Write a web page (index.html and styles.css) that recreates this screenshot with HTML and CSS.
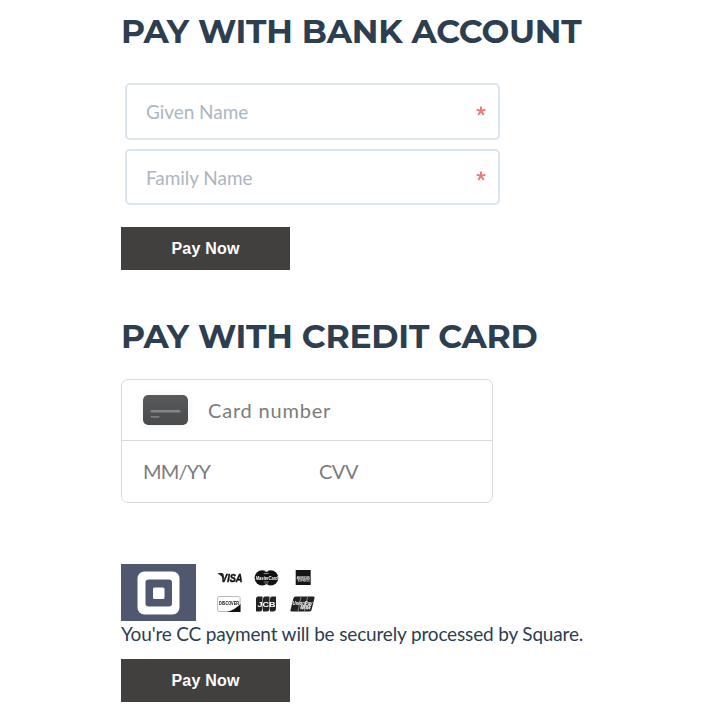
FILE: index.html
```html
<!DOCTYPE html>
<html lang="en">
<head>
<meta charset="utf-8">
<title>Payment</title>
<link rel="stylesheet" href="styles.css">
</head>
<body>
<main class="page">
  <section class="bank">
    <h2 class="title">PAY WITH BANK ACCOUNT</h2>
    <div class="fields">
      <div class="field"><span>Given Name</span><svg class="req" viewBox="0 0 10 10"><path d="M5 5V.4M5 5L.6 3.7M5 5L9.4 3.7M5 5L2.2 8.9M5 5L7.8 8.9"/></svg></div>
      <div class="field"><span>Family Name</span><svg class="req" viewBox="0 0 10 10"><path d="M5 5V.4M5 5L.6 3.7M5 5L9.4 3.7M5 5L2.2 8.9M5 5L7.8 8.9"/></svg></div>
    </div>
    <button class="pay">Pay Now</button>
  </section>
  <section class="credit">
    <h2 class="title">PAY WITH CREDIT CARD</h2>
    <div class="card-box">
      <div class="row number">
        <svg class="card-icon" viewBox="0 0 45 30"><defs><linearGradient id="g" x2="0" y2="1"><stop stop-color="#58595b"/><stop offset="1" stop-color="#484a4b"/></linearGradient></defs><rect width="45" height="30" rx="4.5" fill="url(#g)"/><rect x="7.5" y="15" width="30" height="2.5" rx="1" fill="#858687"/><rect x="7.5" y="21" width="9" height="1.8" rx=".7" fill="#7b7c7d"/></svg>
        <span class="t-number">Card number</span>
      </div>
      <div class="row details"><span class="t-exp">MM/YY</span><span class="t-cvv">CVV</span></div>
    </div>
    <div class="brands">
      <svg class="square" viewBox="0 0 75 57"><rect width="75" height="57" fill="#4f586e"/><rect x="16.5" y="7.5" width="42" height="43" rx="7" fill="#fff"/><rect x="24.5" y="15.5" width="26.500" height="27" rx="3" fill="#4f586e"/><rect x="32" y="23.500" width="11.500" height="11.500" rx="1.500" fill="#fff"/></svg>
      <svg class="logos" viewBox="0 0 104 48">
        <text class="visa" x="4" y="14" textLength="21.500" lengthAdjust="spacingAndGlyphs">VISA</text><path d="M.500 5h5l2 6z" fill="#222"/>
        <g transform="translate(2.700 .500)">
          <circle cx="42.500" cy="9.300" r="7.600" fill="#111"/><circle cx="51" cy="9.300" r="7.600" fill="#111"/>
          <path d="M45 3h3.500M44 5h5M44 13.500h5M45 15.500h3.500" stroke="#ddd" stroke-width=".6"/>
          <text class="mc" x="36" y="11.300" textLength="22" lengthAdjust="spacingAndGlyphs">MasterCard</text>
          <rect x="76" y="1.500" width="15" height="15" fill="#151515"/><rect x="77" y="7.800" width="13" height="4" fill="#555"/>
          <text class="amex" x="77" y="10.300" textLength="13" lengthAdjust="spacingAndGlyphs">AMERICAN</text><text class="amex" x="78" y="13.500" textLength="12" lengthAdjust="spacingAndGlyphs">EXPRESS</text>
        </g>
        <rect x=".6" y="28.500" width="22.500" height="15" rx="1.500" fill="#fff" stroke="#bbb"/><path d="M23.500 36v8H10Q19 41 23.500 36z" fill="#111"/>
        <text class="disc" x="2" y="36.800" textLength="20" lengthAdjust="spacingAndGlyphs">DISCOVER</text>
        <path d="M41 28.500h4.500v12q0 3-3 3H39v-12q0-3 2-3zM48 28.500h4.500v12q0 3-3 3H46v-12q0-3 2-3zM55 28.500h4v12q0 3-3 3h-3v-12q0-3 2-3z" fill="#222"/>
        <text class="jcb" x="40.500" y="39" textLength="18" lengthAdjust="spacingAndGlyphs">JCB</text>
        <g transform="translate(-.500 0)"><path d="M79 28.500h18q1.500 0 1 1.500l-3 12q-.5 1.500-2 1.500H75q-1.500 0-1-1.500l3-12q.5-1.500 2-1.500z" fill="#222"/><path d="M84.500 29l-3 14M91 29l-3 14" stroke="#aaa" stroke-width=".7"/>
        <text class="up" x="76" y="36.500" textLength="20" lengthAdjust="spacingAndGlyphs">UnionPay</text><text class="up" x="83" y="41" textLength="11" lengthAdjust="spacingAndGlyphs">银联</text></g>
      </svg>
    </div>
    <p class="note">You're CC payment will be securely processed by Square.</p>
    <button class="pay">Pay Now</button>
  </section>
</main>
</body>
</html>
```

FILE: styles.css
```css
* { box-sizing: border-box; }
body { margin: 0; background: #fff; color: #2c3e50; font-family: Lato, sans-serif; }
.page { padding: 11px 0 0 121px; }
.title { margin: 0; height: 40px; font: 700 33px/41px Montserrat, Inter, sans-serif; letter-spacing: -.24px; white-space: nowrap; }
.fields { margin: 32px 0 22px 4px; display: grid; gap: 9px; width: 375px; }
.field { height: 57px; border: 2px solid #dce4ec; border-radius: 5px; display: flex; align-items: center; justify-content: space-between; padding: 0 11px 0 19px; font-size: 19px; color: #acb6c0; }
.field span { letter-spacing: -.05px; }
.field + .field { height: 56px; }
.req { width: 10px; height: 10px; margin: -2px 1px 0 0; stroke: #ef7777; stroke-width: 1.9; fill: none; }
.pay { display: block; width: 169px; height: 43px; border: 0; padding: 0; background: #42403e; color: #fff; font: 700 16px/43px "Liberation Sans", sans-serif; letter-spacing: .2px; }
.credit { margin-top: 46px; }
.card-box { margin-top: 23px; width: 372px; height: 124px; border: 1px solid #d9d9d9; border-radius: 7px; font-size: 20px; color: #7c7c7c; }
.row { display: flex; align-items: center; padding-left: 21px; }
.number { height: 61px; border-bottom: 1px solid #d9d9d9; }
.details { height: 60px; }
.card-icon { width: 45px; height: 30px; margin-right: 20px; border-radius: 5px; box-shadow: 0 1px 8px rgba(0,0,0,.07); }
.t-number { letter-spacing: .8px; }
.t-exp { width: 176px; letter-spacing: -.8px; }
.t-cvv { letter-spacing: -.5px; }
.brands { display: flex; margin-top: 61px; height: 57px; }
.square { width: 75px; height: 57px; }
.logos { width: 104px; height: 48px; margin: 4px 0 0 21px; filter: blur(.4px); font-family: "Liberation Sans", sans-serif; }
.visa { font: italic 900 11px "Liberation Sans", sans-serif; fill: #111; stroke: #111; stroke-width: .5; }
.mc { font-size: 5px; font-weight: 700; font-style: italic; fill: #fff; }
.amex { font-size: 3px; fill: #eee; }
.disc { font-size: 5px; font-weight: 700; fill: #111; }
.jcb { font-size: 8px; font-weight: 700; fill: #fff; }
.up { font: italic 700 5px "Liberation Sans", "Noto Sans CJK SC", sans-serif; fill: #fff; }
.note { margin: 0 0 14px; height: 24px; font-size: 19px; line-height: 26px; letter-spacing: -.16px; white-space: nowrap; }
```
